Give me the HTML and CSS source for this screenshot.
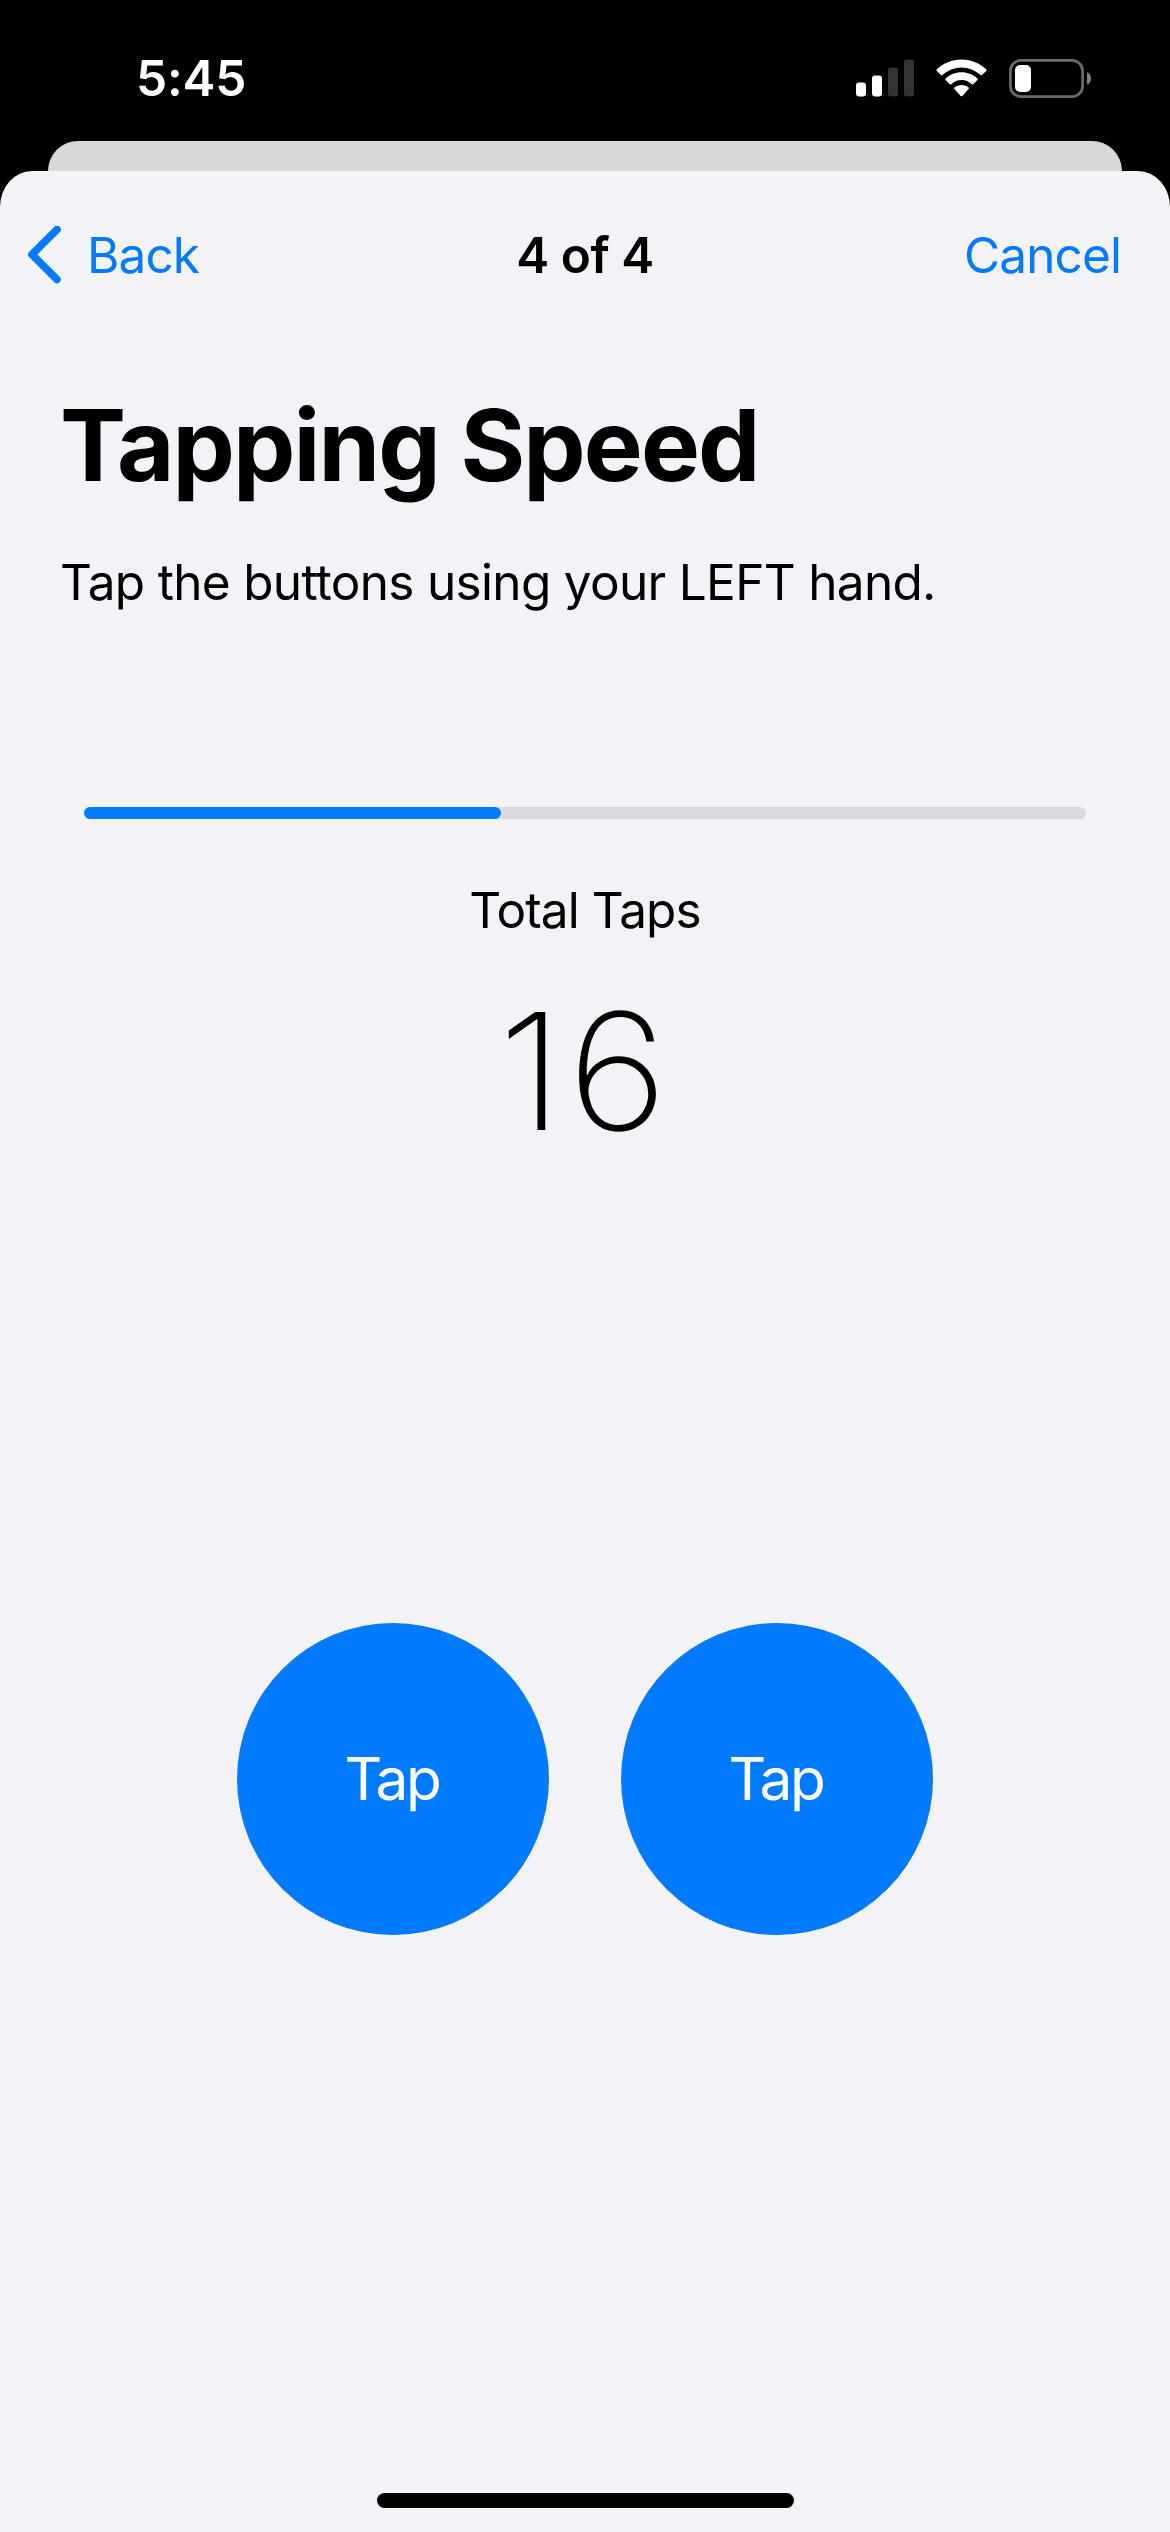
FILE: index.html
```html
<!DOCTYPE html>
<html lang="en">
<head>
<meta charset="utf-8">
<title>Tapping Speed</title>
<link rel="stylesheet" href="styles.css">
</head>
<body>
<div class="screen">
  <header class="status">
    <span class="time">5:45</span>
    <div class="indicators">
      <svg class="signal" width="58" height="38" viewBox="0 0 58 38">
        <g fill="#fff"><rect y="23.5" width="10" height="14" rx="3"/><rect x="16" y="16.5" width="10" height="21" rx="3"/></g>
        <g fill="#333"><rect x="32" y="8.5" width="10" height="29" rx="3"/><rect x="48" y="0.5" width="10" height="37" rx="3"/></g>
      </svg>
      <svg class="wifi" width="51" height="38" viewBox="0 0 51 38" fill="#fff">
        <path d="M25.5 0.5C35.1 .5 43.9 4.3 50.2 10.3Q51 11 50.2 11.9L46 16.1Q45.3 16.8 44.5 16.1C39.5 11.300 32.800 8.400 25.500 8.400C18.200 8.400 11.500 11.300 6.500 16.100Q5.700 16.800 5 16.100L.8 11.900Q0 11 .8 10.300C7.100 4.300 15.900 .5 25.500 .5Z"/>
        <path d="M25.500 13.200C31.700 13.200 37.200 15.600 41.400 19.400Q42.200 20.200 41.400 21L37.200 25.200Q36.500 25.900 35.700 25.200C33 22.700 29.500 21.100 25.500 21.100C21.500 21.100 18 22.700 15.300 25.200Q14.500 25.900 13.800 25.200L9.600 21Q8.800 20.200 9.600 19.400C13.800 15.600 19.300 13.200 25.500 13.200Z"/>
        <path d="M25.500 26C28.300 26 30.700 26.900 32.600 28.500Q33.400 29.300 32.600 30.100L26.300 36.900Q25.500 37.700 24.700 36.900L18.400 30.100Q17.600 29.300 18.400 28.500C20.300 26.900 22.700 26 25.500 26Z"/>
      </svg>
      <svg class="battery" width="82" height="39" viewBox="0 0 82 39">
        <rect x="1.400" y="1.400" width="72.200" height="36.200" rx="10.500" fill="none" stroke="#6b6b6b" stroke-width="2.700"/>
        <path d="M78 13.300C80.500 14.300 82 16.800 82 19.500C82 22.200 80.500 24.700 78 25.700Z" fill="#808080"/>
        <rect x="6" y="6" width="16" height="27" rx="5" fill="#fff"/>
      </svg>
    </div>
  </header>
  <div class="underlay"></div>
  <main class="sheet">
    <nav class="nav">
      <a class="back">
        <svg width="34" height="58" viewBox="0 0 34 58"><path d="M29 3.500L4 28.500L29 53.500" fill="none" stroke="#007aff" stroke-width="7.600" stroke-linecap="round" stroke-linejoin="round"/></svg>
        <span class="back-label">Back</span>
      </a>
      <span class="step">4 of 4</span>
      <a class="cancel">Cancel</a>
    </nav>
    <h1 class="title">Tapping Speed</h1>
    <p class="hint">Tap the buttons using your LEFT hand.</p>
    <div class="progress"><div class="bar" style="width:417px"></div></div>
    <p class="caption">Total Taps</p>
    <p class="count">16</p>
    <div class="buttons">
      <button class="tap">Tap</button>
      <button class="tap">Tap</button>
    </div>
    <div class="home"></div>
  </main>
</div>
</body>
</html>
```

FILE: styles.css
```css
* { box-sizing: border-box; margin: 0; padding: 0; }

body {
  width: 1170px;
  height: 2532px;
  background: #000;
  color: #000;
  font-family: Inter, "Liberation Sans", sans-serif;
  font-size: 49.5px;
  overflow: hidden;
}

.screen {
  display: flex;
  flex-direction: column;
  height: 2532px;
}

.status {
  display: flex;
  justify-content: space-between;
  align-items: center;
  height: 141px;
  padding: 15px 79px 0 136px;
  color: #fff;
}

.time { font-weight: 560; letter-spacing: -0.2px; }

.indicators { display: flex; align-items: center; gap: 22px; }

.underlay {
  height: 30px;
  margin: 0 48px;
  background: #d8d8d8;
  border-radius: 30px 30px 0 0;
}

.sheet {
  display: flex;
  flex-direction: column;
  flex: 1;
  background: #f2f2f7;
  border-radius: 32px 32px 0 0 / 36px 36px 0 0;
}

.nav {
  display: grid;
  grid-template-columns: 1fr auto 1fr;
  align-items: center;
  height: 168px;
  padding: 0 49px;
}

.back {
  display: flex;
  align-items: center;
  gap: 25px;
  margin-left: -21px;
  color: #007aff;
  letter-spacing: -0.9px;
}

.step { font-weight: 600; letter-spacing: -0.5px; }
.cancel { justify-self: end; color: #007aff; letter-spacing: -0.9px; }

.title {
  margin: 46px 0 0 60px;
  font-size: 99px;
  font-weight: 700;
  line-height: 120px;
  letter-spacing: -1.9px;
}

.hint {
  margin: 47px 0 0 60px;
  line-height: 60px;
  letter-spacing: -0.68px;
  white-space: nowrap;
}

.progress {
  height: 12px;
  margin: 195px 84px 0;
  background: #d9d9de;
  border-radius: 6px;
}

.bar { height: 12px; background: #007aff; border-radius: 6px; }

.caption {
  margin-top: 61px;
  line-height: 60px;
  letter-spacing: -0.9px;
  text-align: center;
}

.count {
  margin-top: 31px;
  font-size: 162px;
  font-weight: 200;
  line-height: 200px;
  letter-spacing: 4px;
  text-align: center;
  transform: scaleX(1.06);
}

.buttons { display: flex; justify-content: center; gap: 72px; margin-top: 452px; }

.tap {
  width: 312px;
  height: 312px;
  padding: 0 2px 2px 0;
  border: 0;
  border-radius: 50%;
  background: #007aff;
  color: #fff;
  font-family: inherit;
  font-size: 58.5px;
  letter-spacing: -2.4px;
}

.home {
  width: 417px;
  height: 15px;
  margin: auto auto 24px;
  background: #000;
  border-radius: 8px;
}
```
